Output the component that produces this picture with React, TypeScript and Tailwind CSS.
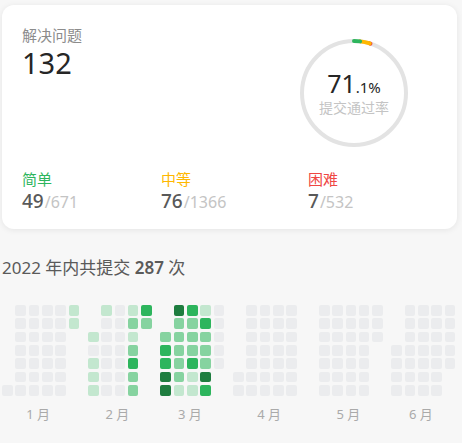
import React from 'react';

type Month = { label: string; start: number; levels: number[]; extraCol?: boolean };

const zeros = (n: number) => Array.from({ length: n }, () => 0);

// levels per day, 0 = no submissions
const months: Month[] = [
  { label: '1 月', start: 6, levels: [...zeros(29), 1, 1] },
  {
    label: '2 月',
    start: 2,
    levels: [1, 0, 1, 1, 1, 1, 0, 0, 0, 0, 0, 0, ...zeros(7), 1, 2, 1, 2, 3, 2, 2, 3, 2],
  },
  {
    label: '3 月',
    start: 2,
    levels: [
      2, 3, 3, 4, 4,
      4, 2, 2, 2, 2, 2, 1,
      3, 2, 2, 2, 3, 1, 1,
      1, 3, 2, 2, 2, 4, 3,
      0, 0, 0, 0, 0,
    ],
  },
  { label: '4 月', start: 5, levels: zeros(30), extraCol: true },
  { label: '5 月', start: 0, levels: zeros(31) },
  { label: '6 月', start: 3, levels: zeros(30) },
];

const levelColor = ['bg-[#ebecee]', 'bg-[#c3e7cf]', 'bg-[#86d3a0]', 'bg-[#2db55d]', 'bg-[#1e7d3f]'];

const stats = [
  { name: '简单', color: 'text-[#2db55d]', solved: 49, total: 671, width: 'w-[139px]' },
  { name: '中等', color: 'text-[#ffb800]', solved: 76, total: 1366, width: 'w-[147px]' },
  { name: '困难', color: 'text-[#ef4743]', solved: 7, total: 532, width: '' },
];

const ProgressRing = () => {
  const r = 52;
  const c = 2 * Math.PI * r;
  const all = 671 + 1366 + 532;
  const easy = (49 / all) * c;
  const mid = (76 / all) * c;
  const hard = (7 / all) * c;
  return (
    <div className="relative w-[108px] h-[108px] flex flex-col items-center justify-center">
      <svg width="108" height="108" viewBox="0 0 108 108" className="absolute inset-0">
        <circle cx="54" cy="54" r={r} fill="none" stroke="#e3e3e3" strokeWidth="4" />
        <g transform="rotate(-90 54 54)">
          <circle
            cx="54" cy="54" r={r} fill="none" stroke="#ef4743" strokeWidth="4" strokeLinecap="round"
            strokeDasharray={`${hard} ${c}`} strokeDashoffset={-(easy + mid)}
          />
          <circle
            cx="54" cy="54" r={r} fill="none" stroke="#ffb800" strokeWidth="4" strokeLinecap="round"
            strokeDasharray={`${mid} ${c}`} strokeDashoffset={-easy}
          />
          <circle
            cx="54" cy="54" r={r} fill="none" stroke="#2db55d" strokeWidth="4" strokeLinecap="round"
            strokeDasharray={`${easy} ${c}`}
          />
        </g>
      </svg>
      <div className="relative flex items-baseline text-[#262626]">
        <span className="text-[25px] leading-[30px]">71</span>
        <span className="text-[15px] leading-[20px]">.1%</span>
      </div>
      <div className="relative text-[14px] leading-[20px] text-[#c4c4c4]">提交通过率</div>
    </div>
  );
};

export default function App() {
  return (
    <div
      className="min-h-screen bg-[#f7f7f7] px-[2px] pt-[5px]"
      style={{ fontFamily: '"Noto Sans", "Noto Sans CJK SC", sans-serif' }}
    >
      <div className="h-[224px] w-[455px] rounded-xl bg-white shadow-[0_1px_6px_rgba(0,0,0,0.08)] px-5 pt-[20px] flex flex-col">
        <div className="flex justify-between">
          <div className="flex flex-col">
            <span className="text-[15px] leading-[20px] text-[#8c8c8c]">解决问题</span>
            <span className="text-[29px] leading-[36px] text-[#262626]">132</span>
          </div>
          <div className="mt-[14px] mr-[29px]">
            <ProgressRing />
          </div>
        </div>
        <div className="flex mt-[22px]">
          {stats.map((s) => (
            <div key={s.name} className={`flex flex-col ${s.width}`}>
              <span className={`text-[15px] leading-[20px] ${s.color}`}>{s.name}</span>
              <div className="flex items-baseline">
                <span className="text-[19px] leading-[24px] font-medium text-[#595959]">{s.solved}</span>
                <span className="text-[16px] leading-[24px] text-[#c4c4c4] ml-[1px]">/{s.total}</span>
              </div>
            </div>
          ))}
        </div>
      </div>

      <div className="mt-[27px] text-[17px] leading-[24px] text-[#5a5a5a]">
        2022 年内共提交 <span className="font-semibold">287</span> 次
      </div>

      <div className="mt-[25px] flex gap-[8.67px]">
        {months.map((m) => {
          const cells = [...Array(m.start).fill(-1), ...m.levels];
          if (m.extraCol) {
            const pad = (7 - (cells.length % 7)) % 7;
            cells.push(...Array(pad + 7).fill(-1));
          }
          return (
            <div key={m.label} className="flex flex-col items-center">
              <div className="grid grid-rows-[repeat(7,10.67px)] grid-flow-col auto-cols-[10.67px] gap-[2.67px]">
                {cells.map((lv, i) => (
                  <div
                    key={i}
                    className={`rounded-[2px] ${lv < 0 ? 'bg-transparent' : levelColor[lv]}`}
                  />
                ))}
              </div>
              <span className="mt-[9px] pr-[5px] text-[13px] leading-[18px] text-[#aaaaaa]">{m.label}</span>
            </div>
          );
        })}
      </div>
    </div>
  );
}
